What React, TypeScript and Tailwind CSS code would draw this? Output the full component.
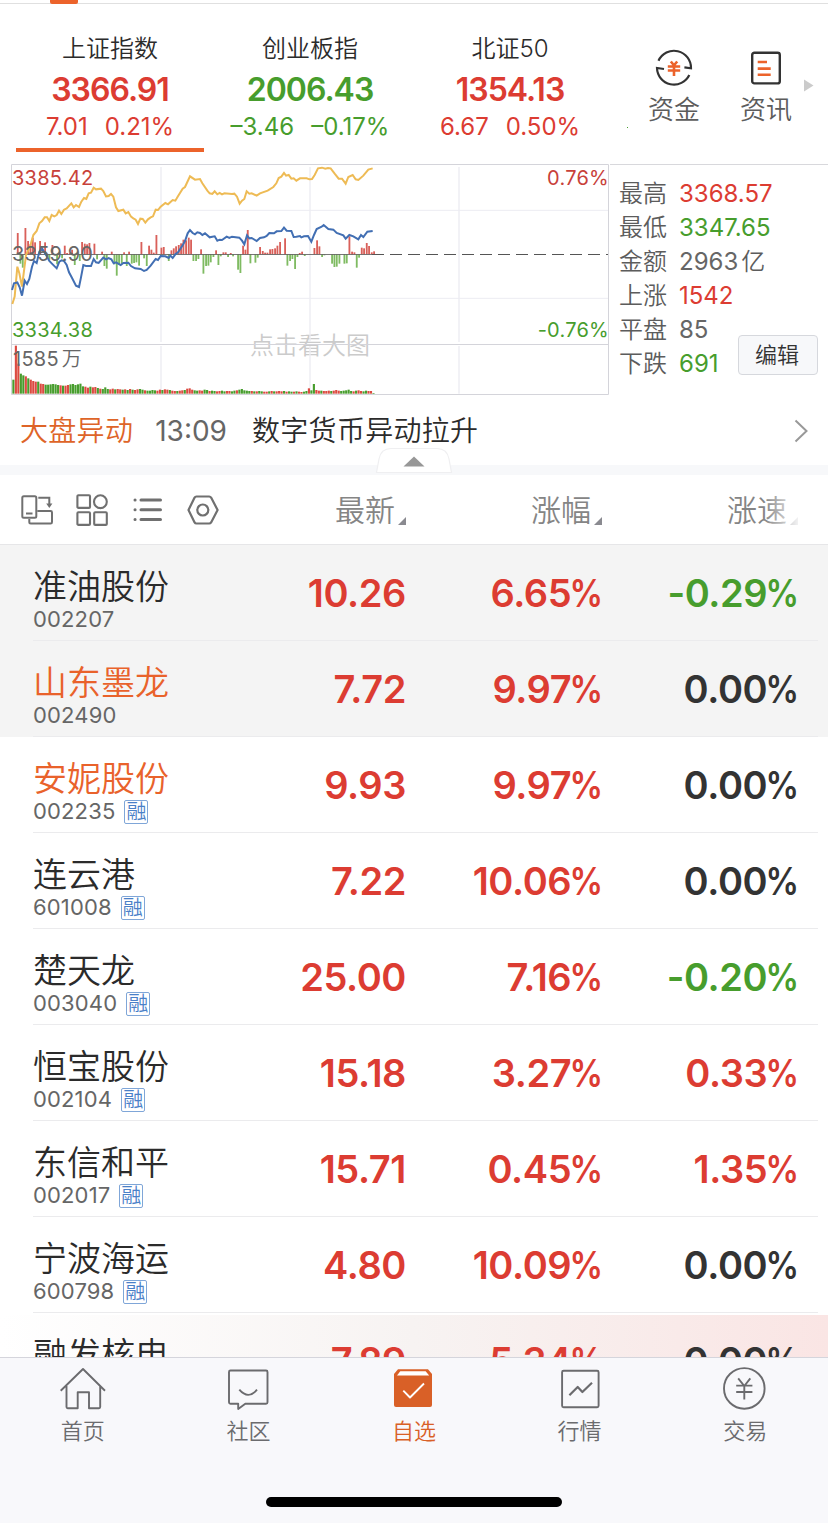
import type { ReactNode } from "react";

type Tone = "up" | "down" | "flat";

const toneClass: Record<Tone, string> = {
  up: "text-[#dc3c32]",
  down: "text-[#479d2d]",
  flat: "text-[#333333]",
};

const indices: {
  name: string;
  value: string;
  change: string;
  percent: string;
  tone: Tone;
}[] = [
  { name: "上证指数", value: "3366.91", change: "7.01", percent: "0.21%", tone: "up" },
  { name: "创业板指", value: "2006.43", change: "–3.46", percent: "–0.17%", tone: "down" },
  { name: "北证50", value: "1354.13", change: "6.67", percent: "0.50%", tone: "up" },
];

const stocks: {
  name: string;
  code: string;
  margin?: boolean;
  visited?: boolean;
  pinned?: boolean;
  price: string;
  percent: string;
  speed: string;
  speedTone: Tone;
}[] = [
  { name: "准油股份", code: "002207", pinned: true, price: "10.26", percent: "6.65%", speed: "-0.29%", speedTone: "down" },
  { name: "山东墨龙", code: "002490", pinned: true, visited: true, price: "7.72", percent: "9.97%", speed: "0.00%", speedTone: "flat" },
  { name: "安妮股份", code: "002235", margin: true, visited: true, price: "9.93", percent: "9.97%", speed: "0.00%", speedTone: "flat" },
  { name: "连云港", code: "601008", margin: true, price: "7.22", percent: "10.06%", speed: "0.00%", speedTone: "flat" },
  { name: "楚天龙", code: "003040", margin: true, price: "25.00", percent: "7.16%", speed: "-0.20%", speedTone: "down" },
  { name: "恒宝股份", code: "002104", margin: true, price: "15.18", percent: "3.27%", speed: "0.33%", speedTone: "up" },
  { name: "东信和平", code: "002017", margin: true, price: "15.71", percent: "0.45%", speed: "1.35%", speedTone: "up" },
  { name: "宁波海运", code: "600798", margin: true, price: "4.80", percent: "10.09%", speed: "0.00%", speedTone: "flat" },
];

const indexLine =
  "36,405 42,385 52,382 59,397 66,422 74,377 81,387 88,372 96,335 102,318 110,324 118,290 126,280 133,292 140,303 148,318 155,325 170,340 178,320 185,316 192,318 200,330 207,352 215,367 228,392 237,396 243,367 250,330 258,333 273,333 281,312 288,322 296,324 310,308 318,313 326,309 334,313 341,325 348,322 362,330 370,324 385,323 393,333 405,340 422,342 432,348 440,345 452,332 467,312 474,315 482,303 496,304 506,309 511,302 518,309 526,298 534,292 548,271 555,258 563,235 570,225 578,234 585,238 592,232 600,234 607,240 615,235 629,247 637,245 644,244 652,257 659,254 666,255 680,245 688,249 696,245 718,248 726,257 733,268 741,241 748,250 755,249 770,258 780,249 792,247 800,243 808,234 822,235 830,229 844,228 852,218 860,227 874,228 881,246 889,245 900,243 904,247 912,244 924,243 934,260 942,240 950,222 965,215 971,210 985,222 1000,224 1010,234 1030,241 1037,251 1048,240 1060,244 1075,253 1083,240 1090,246 1102,230 1118,228";

const leadLine =
  "37,447 44,425 52,335 58,355 66,395 78,300 90,275 100,240 110,228 118,205 126,198 134,187 141,187 148,198 155,180 163,184 170,180 177,167 184,177 192,164 200,160 214,145 221,157 228,150 237,156 244,140 252,129 259,132 266,115 273,113 281,98 288,103 303,101 310,108 318,124 326,123 333,117 340,125 348,157 355,168 370,164 377,175 385,171 393,185 400,190 407,194 414,207 421,191 428,192 436,203 444,193 452,187 459,184 467,164 474,165 482,155 496,144 504,148 518,135 526,137 533,125 548,101 555,96 570,64 585,74 600,72 607,85 622,107 629,115 637,117 644,109 652,118 659,114 666,118 673,115 696,117 703,116 711,125 719,146 726,137 733,132 740,109 748,116 755,115 770,122 780,115 803,107 820,96 829,85 836,69 844,65 852,54 858,62 866,60 874,71 881,70 889,77 900,70 920,70 928,73 936,72 944,60 954,40 966,38 976,41 984,39 992,40 1004,56 1016,71 1026,71 1037,86 1045,66 1058,60 1067,73 1075,75 1090,62 1105,44 1118,40";

// [x, signed height] around the previous close
const momentum = [
  [53, 64], [61, -28], [68, -40], [76, 79], [84, 40], [91, 30], [98, 50], [105, 36], [120, 40], [135, 36],
  [142, -10], [148, -16], [157, 28], [171, -30], [186, -12], [194, 26], [201, 4], [209, 4], [216, 14], [224, -32],
  [239, -20], [246, 37], [254, 32], [261, 30], [268, 34], [283, 32], [291, -15], [306, 8], [313, -35], [320, -43],
  [335, 8], [343, -30], [350, -64], [357, -30], [365, -28], [372, 6], [380, -35], [387, 8], [395, -28], [402, -26],
  [409, -24], [417, -34], [424, 37], [432, -12], [440, -35], [447, 26], [454, 14], [461, 5], [469, 58], [484, 20],
  [491, 22], [506, -20], [514, 12], [521, 18], [528, 24], [536, 28], [543, 33], [550, 44], [558, 42], [566, 50],
  [573, 44], [580, -20], [588, -20], [595, -14], [603, 15], [610, -58], [618, -35], [625, -34], [632, -24], [640, -8],
  [648, 12], [655, -32], [662, -6], [670, 6], [677, 6], [684, -8], [692, 4], [699, -6], [714, -46], [721, -56],
  [729, 26], [736, 14], [743, 73], [751, -27], [766, -25], [773, -10], [780, 22], [788, 10], [795, 5], [802, 5],
  [810, 15], [817, 16], [825, 18], [832, 26], [840, 37], [855, 48], [862, -34], [870, -20], [877, -14], [885, -44],
  [892, -8], [899, 4], [906, 8], [914, -5], [943, 19], [951, 42], [958, 24], [966, -8], [973, -3], [996, -28],
  [1003, -38], [1010, -37], [1018, -28], [1033, -28], [1040, -27], [1048, 54], [1056, 8], [1063, 6], [1070, -40],
  [1077, -10], [1085, 20], [1092, 18], [1100, 34], [1107, 25], [1115, 6], [1122, 9],
];

const volume = [
  42, 144, 90, 60, 55, 52, 46, 42, 38, 36, 36, 30, 29, 27, 27, 28, 29, 28, 26, 25, 24, 24, 26, 28, 29, 26, 28, 30,
  22, 21, 18, 21, 19, 20, 17, 15, 14, 19, 14, 13, 15, 13, 14, 13, 12, 13, 11, 14, 12, 11, 13, 14, 12, 10, 9, 9, 11, 10,
  9, 12, 11, 13, 12, 11, 9, 8, 8, 9, 10, 11, 15, 16, 12, 10, 9, 10, 9, 12, 11, 8, 9, 8, 7, 8, 9, 7, 8, 8, 7, 9, 10, 12,
  14, 10, 9, 8, 8, 7, 7, 8, 7, 6, 6, 7, 8, 7, 7, 8, 7, 8, 6, 7, 6, 6, 7, 6, 5, 6, 8, 16, 10, 29, 11, 9, 9, 8, 8, 9, 8, 9,
  11, 9, 8, 9, 10, 12, 8, 7, 9, 10, 8, 7, 9, 8, 8, 2,
];
const volumeTones =
  "grrggrgrrrgrrggggggrgrrggggggrrgrrgrgggrrgrrgrgrgrrggrggggrrgrrgrrgrrgrrrggrrggrggrrggrrggrgggggrgrggrrgrgrrrgrggrgrrggrggrrgrrrgrrrgggggrgrrggrrgrgr";

function MinuteChart() {
  return (
    <div className="relative h-[231px] w-[599px] shrink-0 text-xl leading-6 tracking-[0.25px]">
      <span className="absolute bottom-[37px] left-[239px] text-2xl font-[350] leading-6 tracking-normal text-[#cbcbcb]">
        点击看大图
      </span>
      <svg className="absolute inset-0" width="599" height="231" viewBox="33 27 1797 693">
        <g stroke="#ececf2" strokeWidth="4">
          <path d="M483 36V561M483 573V716M930 36V561M930 573V716M1377 36V561M1377 573V716" />
          <path d="M36 166H1824M36 430H1824" strokeWidth="3" />
        </g>
        <path
          d="M34.5 28.5H1825.5V718.5H34.5ZM36 568.5H1824"
          fill="none"
          stroke="#d4d4da"
          strokeWidth="3"
        />
        {momentum.map(([x, h]) => (
          <rect
            key={x}
            x={x - 2.5}
            y={h > 0 ? 298 - h : 298}
            width="5.5"
            height={Math.abs(h)}
            fill={h > 0 ? "#d9605a" : "#7fbb62"}
          />
        ))}
        {volume.map((h, i) => (
          <rect
            key={i}
            x={37 + i * 7.45}
            y={716 - h}
            width="6.4"
            height={h}
            fill={volumeTones[i] === "r" ? "#dc4a41" : "#479d2d"}
          />
        ))}
        <path d="M36 298.5H1120" stroke="#5b5b5b" strokeWidth="2.5" />
        <path d="M1116 298.5H1824" stroke="#555" strokeWidth="3" strokeDasharray="36 18" />
        <polyline points={leadLine} fill="none" stroke="#eebb55" strokeWidth="6" />
        <polyline points={indexLine} fill="none" stroke="#426fb3" strokeWidth="6" />
      </svg>
      <span className="absolute left-px top-[2px] text-[#c8413a]">3385.42</span>
      <span className="absolute left-px top-[78px] text-[#666]">3359.90</span>
      <span className="absolute left-px top-[154px] text-[#479d2d]">3334.38</span>
      <span className="absolute left-[2px] top-[183px] text-[#666]">
        1585<span className="ml-[3px] font-[350]">万</span>
      </span>
      <span className="absolute right-px top-[2px] text-[#c8413a]">0.76%</span>
      <span className="absolute right-px top-[154px] text-[#479d2d]">-0.76%</span>
    </div>
  );
}

function Stat(props: { label: string; value: string; unit?: string; color: string }) {
  return (
    <div className="flex h-[34px] items-center">
      <span className="mr-3 font-[350] text-[#5c5c5c]">{props.label}</span>
      <span className={props.color}>{props.value}</span>
      {props.unit && <span className="ml-[3px] font-[350] text-[#5c5c5c]">{props.unit}</span>}
    </div>
  );
}

function SortHeader(props: { label: string }) {
  return (
    <div className="flex w-[92px] items-center justify-end gap-[3px]">
      <span className="text-[30px] font-[350] leading-[36px]">{props.label}</span>
      <svg className="mt-[22px]" width="8" height="8" viewBox="0 0 8 8">
        <path d="M8 0V8H0Z" fill="#8a8a90" />
      </svg>
    </div>
  );
}

function Figure(props: { tone: Tone; children: string }) {
  const isPercent = props.children.endsWith("%");
  return (
    <span
      className={`w-[196px] text-right text-[38px] font-semibold leading-[46px] tracking-[-0.4px] ${toneClass[props.tone]}`}
    >
      {props.children.replace("%", "")}
      {isPercent && (
        <span className="-mr-px -ml-[6px] inline-block origin-right scale-x-88">%</span>
      )}
    </span>
  );
}

function StockRow(props: { stock: (typeof stocks)[number] }) {
  const { stock } = props;
  return (
    <div className={`pl-[33px] pr-[10px] ${stock.pinned ? "bg-[#f4f4f4]" : "bg-white"}`}>
      <div className="flex h-24 items-center border-b border-[#ebebed] pr-5">
        <div className="flex-1 pt-[14px]">
          <p
            className={`text-[34px] font-[350] leading-[40px] ${
              stock.visited ? "text-[#e9622b]" : "text-[#2b2b2b]"
            }`}
          >
            {stock.name}
          </p>
          <div className="flex h-[25px] items-center gap-[9px]">
            <span className="text-[22px] leading-[25px] tracking-[0.15px] text-[#666]">{stock.code}</span>
            {stock.margin && (
              <span className="flex h-6 w-6 items-center justify-center rounded-xs border border-[#7fa6d8] text-xl font-[350] leading-5 text-[#4a80c8]">
                融
              </span>
            )}
          </div>
        </div>
        <Figure tone="up">{stock.price}</Figure>
        <Figure tone="up">{stock.percent}</Figure>
        <Figure tone={stock.speedTone}>{stock.speed}</Figure>
      </div>
    </div>
  );
}

function NavItem(props: { label: string; active?: boolean; children: ReactNode }) {
  return (
    <div
      className={`flex flex-1 flex-col items-center ${props.active ? "text-[#d96027]" : "text-[#6b6b6e]"}`}
    >
      <svg
        width="50"
        height="50"
        viewBox="0 0 50 50"
        fill="none"
        stroke="currentColor"
        strokeWidth="1.9"
        strokeLinejoin="round"
      >
        {props.children}
      </svg>
      <span className="mt-[3px] text-[22px] font-[350] leading-[28px]">{props.label}</span>
    </div>
  );
}

function App() {
  return (
    <div className="flex h-[1523px] w-[828px] flex-col overflow-hidden bg-white font-[Inter,'Noto_Sans_CJK_SC',sans-serif] text-[#333]">
      <div className="h-1 shrink-0 border-b border-[#e0e0e0] pl-[50px]">
        <div className="h-1 w-7 rounded-b-xs bg-[#ec632b]" />
      </div>

      <div className="flex h-40 shrink-0">
        <div className="flex w-[628px] shrink-0 overflow-hidden pl-[10px]">
          {indices.map((item, i) => (
            <div key={item.name} className="flex w-[200px] shrink-0 flex-col items-center pt-[30px]">
              <span className="text-2xl font-[350] leading-[30px] text-[#2b2b2b]">{item.name}</span>
              <span
                className={`mt-[6px] text-[32px] font-semibold leading-[40px] tracking-[-1px] ${toneClass[item.tone]}`}
              >
                {item.value}
              </span>
              <span className={`-mt-px flex gap-[17px] text-2xl leading-[36px] ${toneClass[item.tone]}`}>
                <span>{item.change}</span>
                <span>{item.percent}</span>
              </span>
              {i === 0 && <div className="mt-[3px] h-1 w-[188px] bg-[#ec632b]" />}
            </div>
          ))}
          <div className="mt-[123px] ml-[17px] h-px w-px shrink-0 bg-[#479d2d]" />
        </div>
        <div className="flex w-[92px] flex-col items-center pt-11">
          <svg width="40" height="40" viewBox="0 0 40 40" fill="none" stroke="#333" strokeWidth="2.2">
            <path d="M4.5 12.8A17 17 0 0 1 37 20.3L30.4 19.4M35.3 27A17 17 0 0 1 3 20L10 21" />
            <path
              d="M16.8 13.5L20 17.3L23.2 13.5M13.8 18.5H26.2M13.8 22.5H26.2M20 17.3V28"
              stroke="#ec632b"
              strokeWidth="2.6"
            />
          </svg>
          <span className="mt-[5px] text-[26px] font-[350] leading-[34px] text-[#5c5c5c]">资金</span>
        </div>
        <div className="flex w-[92px] flex-col items-center pt-11">
          <svg width="40" height="40" viewBox="0 0 40 40" fill="none" stroke="#333" strokeWidth="2.4">
            <rect x="6.2" y="4.8" width="27.6" height="30.6" rx="2.2" />
            <path d="M11.7 14H21M11.7 20.6H24.7M11.7 26.8H24.7" stroke="#ec632b" strokeWidth="2.6" />
          </svg>
          <span className="mt-[5px] text-[26px] font-[350] leading-[34px] text-[#5c5c5c]">资讯</span>
        </div>
        <svg className="mt-[75px] -ml-2" width="10" height="13" viewBox="0 0 10 13">
          <path d="M0 0.5L9.5 6.5L0 12.5Z" fill="#cbcbcb" />
        </svg>
      </div>

      <div className="flex h-[231px] shrink-0 pl-[11px]">
        <MinuteChart />
        <div className="flex flex-1 justify-between border-t border-[#d8d8dc] pl-[9px] pr-[10px] pt-3 text-2xl leading-[34px]">
          <div className="shrink-0 whitespace-nowrap">
            <Stat label="最高" value="3368.57" color="text-[#dc3c32]" />
            <Stat label="最低" value="3347.65" color="text-[#479d2d]" />
            <Stat label="金额" value="2963" unit="亿" color="text-[#666]" />
            <Stat label="上涨" value="1542" color="text-[#dc3c32]" />
            <Stat label="平盘" value="85" color="text-[#666]" />
            <Stat label="下跌" value="691" color="text-[#479d2d]" />
          </div>
          <button className="-ml-10 mt-[158px] h-10 w-20 shrink-0 rounded border border-[#d6d8dd] bg-[#f7f8fa] pr-[2px] text-[22px] font-[350] leading-[38px]">
            编辑
          </button>
        </div>
      </div>

      <div className="relative flex h-20 shrink-0 items-center border-b-10 border-[#f7f8fa] pl-5 pr-5 pt-px text-[28px] tracking-[0.3px]">
        <span className="font-[350] text-[#de6428]">大盘异动</span>
        <span className="ml-[22px] tracking-normal text-[#666]">13:09</span>
        <span className="ml-[25px] flex-1 font-[350] text-[#2b2b2b]">数字货币异动拉升</span>
        <svg width="14" height="24" viewBox="0 0 14 24" fill="none" stroke="#999" strokeWidth="2">
          <path d="M1.5 1.5L12.5 12L1.5 22.5" />
        </svg>
        <svg className="absolute left-[375px] top-[52px]" width="78" height="27" viewBox="0 0 78 27">
          <path
            d="M1.5 25.5L4 12Q6 1.5 16 1.5H62Q72 1.5 74 12L76.5 25.5Z"
            fill="#fff"
            stroke="#efeff1"
            strokeWidth="1.2"
          />
          <path d="M39 9.5L49.5 19.5H28.5Z" fill="#979797" />
        </svg>
      </div>

      <div className="relative flex h-[70px] shrink-0 items-center justify-between border-b border-[#e6e6e8] pl-[21px] pr-[30px] text-[#858585]">
        <div className="flex gap-[23.3px]">
          <svg width="32" height="32" viewBox="0 0 32 32" fill="none" stroke="#707070" strokeWidth="2">
            <rect x="1.3" y="2.3" width="14" height="21.4" rx="1.5" />
            <path d="M5 19.5H11.5M17.3 3.7H28.3V12M8.3 25V28Q8.3 29.5 9.8 29.5H29.6Q31 29.5 31 28V18.4Q31 17 29.6 17H16.3" />
            <path d="M25.2 9.5H31.4L28.3 14Z" fill="#707070" stroke="none" />
          </svg>
          <svg width="32" height="32" viewBox="0 0 32 32" fill="none" stroke="#707070" strokeWidth="2.1">
            <rect x="1.4" y="1.3" width="12.6" height="12.6" rx="1" />
            <circle cx="24.4" cy="7.7" r="6.4" />
            <rect x="1.4" y="18.3" width="12.6" height="12.6" rx="1" />
            <rect x="18.2" y="18.3" width="12.6" height="12.6" rx="1" />
          </svg>
          <svg width="32" height="32" viewBox="0 0 32 32" fill="none" stroke="#707070" strokeWidth="3" strokeLinecap="round">
            <path d="M9 6H28.5M9 15.8H28.5M9 25.5H28.5M3 6H3.1M3 15.8H3.1M3 25.5H3.1" />
          </svg>
          <svg width="32" height="32" viewBox="0 0 32 32" fill="none" stroke="#707070" strokeWidth="2.2" strokeLinejoin="round">
            <path d="M1.5 16L7.6 3.6Q8.2 2.5 9.4 2.5H22.2Q23.4 2.5 24.1 3.6L30.6 16L24.1 28.4Q23.4 29.5 22.2 29.5H9.4Q8.2 29.5 7.6 28.4Z" />
            <circle cx="15.8" cy="16" r="5.5" />
          </svg>
        </div>
        <div className="flex gap-[104px]">
          <SortHeader label="最新" />
          <SortHeader label="涨幅" />
          <SortHeader label="涨速" />
        </div>
        <div className="absolute right-0 top-0 h-[69px] w-[64px] bg-linear-to-r from-white/0 to-white to-60%" />
      </div>

      {/* only the top of the last row shows above the nav bar */}
      <div className="h-[812px] shrink-0 overflow-hidden">
        {stocks.map((stock) => (
          <StockRow key={stock.code} stock={stock} />
        ))}
        <div className="mt-[2px] flex h-24 bg-linear-to-r from-white via-[#f7f3f2] to-[#fae5e4] pl-[33px] pr-[30px]">
          <p className="mt-5 flex-1 text-[34px] font-[350] leading-[40px] text-[#2b2b2b]">融发核电</p>
          <div className="mt-[23px] flex">
            <Figure tone="up">7.89</Figure>
            <Figure tone="up">5.34%</Figure>
            <Figure tone="flat">0.00%</Figure>
          </div>
        </div>
      </div>

      <div className="flex flex-1 flex-col items-center border-t border-[#d5d5dc] bg-[#f8f8fb]">
        <div className="flex w-full pt-[6px]">
          <NavItem label="首页">
            <path d="M2.7 26.7L25 5L47 26.7M8.5 22V43Q8.5 44.2 9.7 44.2H19.7V28.3H31V44.2H41Q42.2 44.2 42.2 43V22" />
          </NavItem>
          <NavItem label="社区">
            <path d="M7.5 6.5H43Q44.5 6.5 44.5 8V38.2Q44.5 39.7 43 39.7H22.3L15.2 45V39.7H7.5Q6 39.7 6 38.2V8Q6 6.5 7.5 6.5Z" />
            <path d="M16.3 25.7Q25.2 36 34 25.7" />
          </NavItem>
          <NavItem label="自选" active>
            <path d="M5 10L9 5.3H39L43 10V41Q43 43 41 43H7Q5 43 5 41Z" fill="currentColor" stroke="none" />
            <path d="M8 11.5L11.3 7.2H36.6L40.2 11.5Z" fill="#fff" stroke="none" />
            <path d="M14.3 26.7L21 33.5L35 19.5" stroke="#fff" />
          </NavItem>
          <NavItem label="行情">
            <rect x="7.1" y="6.8" width="36.5" height="36.5" rx="1.5" />
            <path d="M14.4 31.3L22.7 23L27.4 28L37 18.7" strokeWidth="2.2" />
          </NavItem>
          <NavItem label="交易">
            <circle cx="24.3" cy="24.4" r="20.3" />
            <path d="M18.2 14.3L24.3 22L30.3 14.3M16.2 21.6H32.4M16.2 28H32.4M24.3 22V35.6" />
          </NavItem>
        </div>
        <div className="mt-auto mb-4 h-[10px] w-[296px] rounded-full bg-black" />
      </div>
    </div>
  );
}

export default App;
